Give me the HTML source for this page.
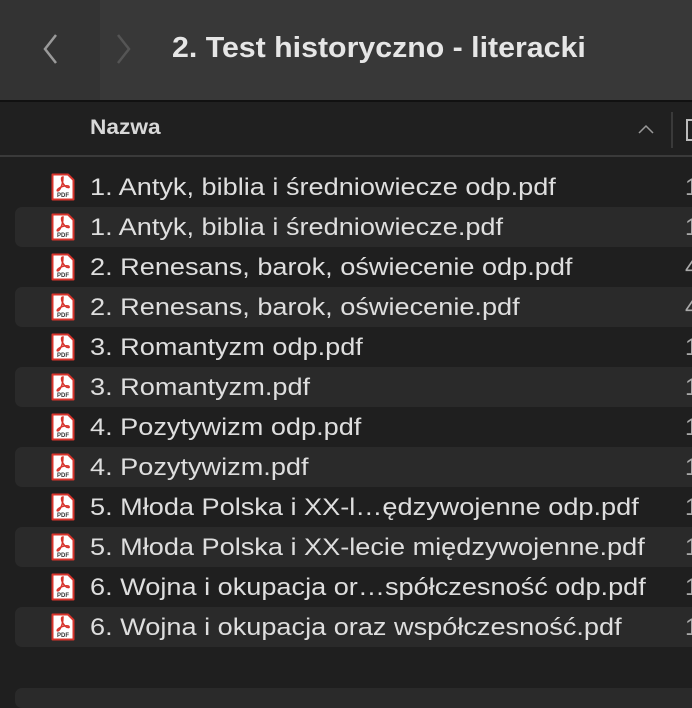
<!DOCTYPE html>
<html><head><meta charset="utf-8"><style>
body{margin:0;width:692px;height:692px;background:#1f1f1f;overflow:hidden;font-family:"Liberation Sans",sans-serif;position:relative}
.tb{position:absolute;left:0;top:0;width:692px;height:100px;background:#383838;border-bottom:2px solid #111}
.tbl{position:absolute;left:0;top:0;width:100px;height:100px;background:#333}
.title{position:absolute;left:172px;top:32px;font-size:29px;font-weight:bold;color:#e6e6e6;transform:scaleX(1.045);transform-origin:left;white-space:nowrap}
.hdr{position:absolute;left:0;top:102px;width:692px;height:53px;border-bottom:2px solid #3a3a3a;background:#202020}
.nz{position:absolute;left:90px;top:14px;font-size:21px;font-weight:bold;color:#d8d8d8;transform:scaleX(1.08);transform-origin:left}
.row{position:absolute;left:15px;width:690px;height:40px;border-radius:7px}
.row.s{background:#2a2a2a}
.row svg{position:absolute;left:36px;top:6px}
.row span{position:absolute;left:75px;top:7px;font-size:24px;color:#dedede;white-space:nowrap;transform:scaleX(1.13);transform-origin:left}
.row i{position:absolute;left:670px;top:7px;font-size:24px;color:#aaa;font-style:normal}
</style></head><body>
<div class="tb"><div class="tbl"></div>
<svg style="position:absolute;left:40px;top:33px" width="20" height="32"><path d="M16 2 L5 16 L16 30" stroke="#9a9a9a" stroke-width="2.5" fill="none"/></svg>
<svg style="position:absolute;left:114px;top:33px" width="20" height="32"><path d="M4 2 L15 16 L4 30" stroke="#555" stroke-width="2.5" fill="none"/></svg>
<div class="title">2. Test historyczno - literacki</div></div>
<div class="hdr"><div class="nz">Nazwa</div>
<svg style="position:absolute;left:637px;top:21px" width="18" height="12"><path d="M2 10 L9 3 L16 10" stroke="#999" stroke-width="1.5" fill="none"/></svg>
<div style="position:absolute;left:671px;top:10px;width:2px;height:36px;background:#3a3a3a"></div>
<div style="position:absolute;left:686px;top:17px;width:8px;height:18px;border:2px solid #bbb;border-right:none"></div>
</div>
<div id="rows"></div>
<div style="position:absolute;left:15px;top:688px;width:690px;height:20px;border-radius:7px;background:#2a2a2a"></div>
<script>
var n=["1. Antyk, biblia i średniowiecze odp.pdf","1. Antyk, biblia i średniowiecze.pdf","2. Renesans, barok, oświecenie odp.pdf","2. Renesans, barok, oświecenie.pdf","3. Romantyzm odp.pdf","3. Romantyzm.pdf","4. Pozytywizm odp.pdf","4. Pozytywizm.pdf","5. Młoda Polska i XX-l…ędzywojenne odp.pdf","5. Młoda Polska i XX-lecie międzywojenne.pdf","6. Wojna i okupacja or…spółczesność odp.pdf","6. Wojna i okupacja oraz współczesność.pdf"];
var ic='<svg width="24" height="28"><path d="M1.5 1.5 H17 L22.5 7 V26.5 H1.5 Z" fill="#fff" stroke="#d8342c" stroke-width="2" stroke-linejoin="round"/><path d="M12 4 C9 4 11 10 14 13 C16 15 19 15 18 13.5 C17 12 10 13 7 16 C5 18 7 19 9 16 C11 13 12 9 12 4 Z" fill="none" stroke="#d8342c" stroke-width="1.5"/><text x="12" y="24" font-size="6" font-family="Liberation Sans" font-weight="bold" fill="#333" text-anchor="middle">PDF</text></svg>';
var h='';for(var k=0;k<12;k++){var d=(k==2||k==3)?'4':'1';h+='<div class="row'+(k%2?' s':'')+'" style="top:'+(167+40*k)+'px">'+ic+'<span>'+n[k]+'</span><i>'+d+'</i></div>';}
document.getElementById('rows').innerHTML=h;
</script>
</body></html>
